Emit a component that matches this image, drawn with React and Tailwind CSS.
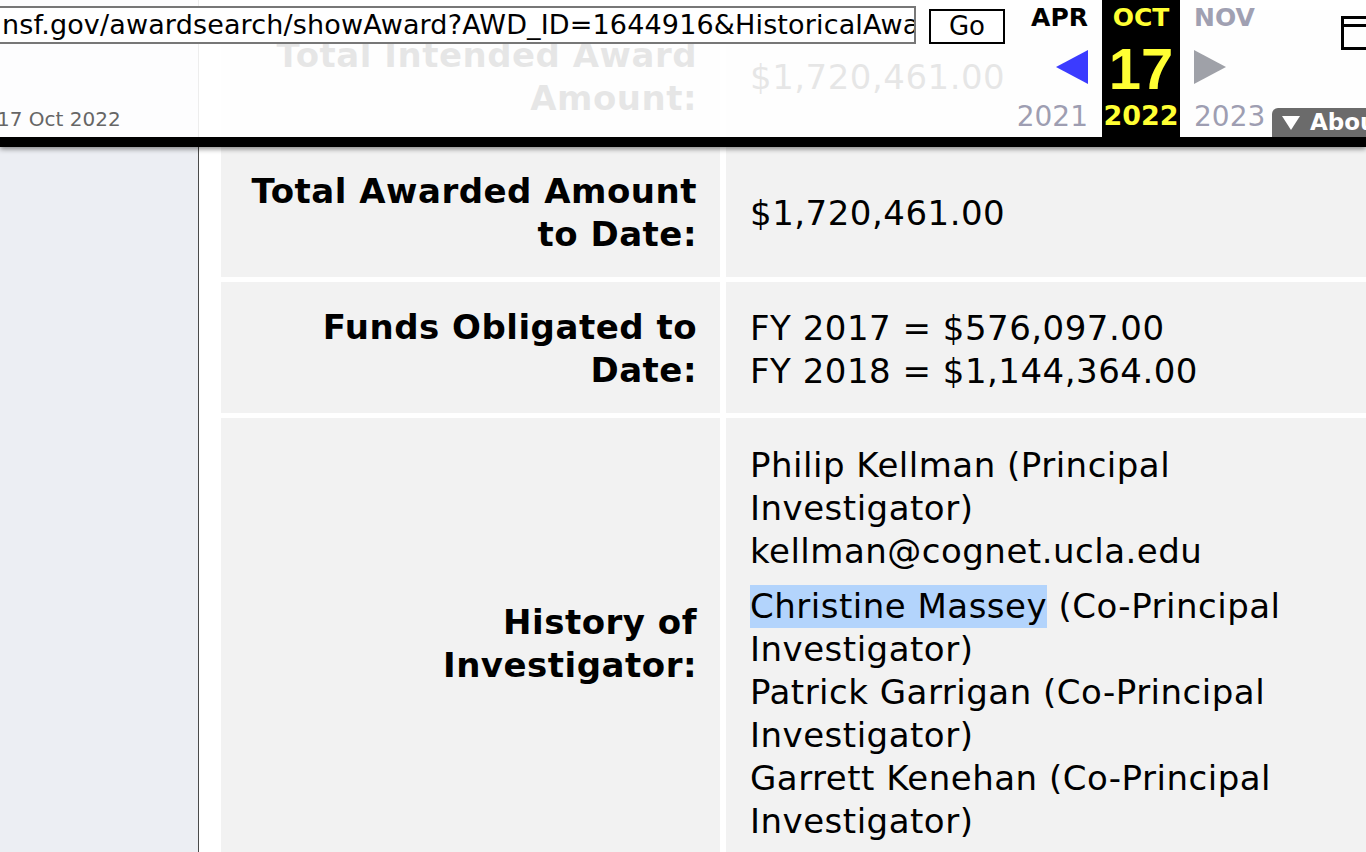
import React from 'react';

const rows = [
  {
    label: ['Total Intended Award', 'Amount:'],
    value: ['$1,720,461.00'],
  },
  {
    label: ['Total Awarded Amount', 'to Date:'],
    value: ['$1,720,461.00'],
  },
  {
    label: ['Funds Obligated to', 'Date:'],
    value: ['FY 2017 = $576,097.00', 'FY 2018 = $1,144,364.00'],
  },
];

const LeftArrow = () => (
  <svg width="32" height="34" viewBox="0 0 32 34">
    <polygon points="32,0 32,34 0,17" fill="#3b3bff" />
  </svg>
);

const RightArrow = () => (
  <svg width="32" height="34" viewBox="0 0 32 34">
    <polygon points="0,0 0,34 32,17" fill="#9fa1a8" />
  </svg>
);

const Toolbar = () => (
  <div className="absolute inset-x-0 top-0 h-[147px] bg-white/90 border-b-[10px] border-black shadow-[0_2px_5px_rgba(0,0,0,0.45)] flex font-['DejaVu_Sans',sans-serif]">
    {/* url + capture date */}
    <div className="w-[1012px] shrink-0 flex flex-col">
      <div className="flex items-start mt-[6px]">
        <div className="-ml-[4px] w-[920px] h-[38px] border-2 border-[#777] bg-white flex items-center pl-[4px] overflow-hidden whitespace-nowrap text-[27px] tracking-[0.15px] text-black">
          nsf.gov/awardsearch/showAward?AWD_ID=1644916&amp;HistoricalAwards=false
        </div>
        <div className="ml-[13px] mt-[3px] w-[76px] h-[35px] border-2 border-black bg-white flex items-center justify-center text-[26px] text-black">
          Go
        </div>
      </div>
      <div className="mt-auto mb-[3px] -ml-[3px] text-[20px] text-[#666]">17 Oct 2022</div>
    </div>

    {/* previous month */}
    <div className="w-[90px] shrink-0 flex flex-col items-end pr-[14px] pt-[3px]">
      <div className="text-[25px] font-bold leading-[30px] text-black">APR</div>
      <div className="mt-[17px]"><LeftArrow /></div>
      <div className="mt-[18px] text-[28px] leading-[30px] text-[#9e9eb2]">2021</div>
    </div>

    {/* current */}
    <div className="w-[78px] shrink-0 bg-black flex flex-col items-center pt-[3px]">
      <div className="text-[25px] font-bold leading-[30px] text-[#ffff33]">OCT</div>
      <div className="font-['Liberation_Sans',sans-serif] text-[58px] font-bold leading-[60px] mt-[6px] text-[#ffff33]">17</div>
      <div className="text-[27px] font-bold leading-[30px] mt-[2px] text-[#ffff33]">2022</div>
    </div>

    {/* next month */}
    <div className="w-[92px] shrink-0 flex flex-col items-start pl-[14px] pt-[3px]">
      <div className="text-[25px] font-bold leading-[30px] text-[#a0a0b2]">NOV</div>
      <div className="mt-[17px]"><RightArrow /></div>
      <div className="mt-[18px] text-[28px] leading-[30px] text-[#9e9eb2]">2023</div>
    </div>

    {/* icon + about tab */}
    <div className="flex-1 min-w-0 overflow-hidden flex flex-col">
      <svg className="ml-[69px] mt-[16px] shrink-0" width="34" height="34" viewBox="0 0 34 34">
        <rect x="1.5" y="1.5" width="34" height="31" fill="none" stroke="#000" strokeWidth="3" />
        <line x1="0" y1="9.5" x2="34" y2="9.5" stroke="#000" strokeWidth="3" />
      </svg>
      <div className="mt-auto h-[29px] bg-[#6b6b6b] rounded-tl-[6px] flex items-center pl-[10px] gap-[10px] text-white whitespace-nowrap overflow-hidden">
        <svg className="shrink-0" width="18" height="14" viewBox="0 0 18 14">
          <polygon points="0,0 18,0 9,14" fill="#fff" />
        </svg>
        <span className="text-[23px] font-bold leading-none">About</span>
      </div>
    </div>
  </div>
);

export default function App() {
  return (
    <div className="relative w-[1366px] h-[852px] overflow-hidden bg-white font-['DejaVu_Sans',sans-serif] text-black">
      <div className="flex h-full">
        <aside className="w-[199px] shrink-0 bg-[#eceef3] border-r border-[#4a4a4a]" />
        <main className="flex-1 pl-[22px] pt-[10px]">
          <div className="grid grid-cols-[499px_640px] gap-x-[6px] gap-y-[5px] text-[34px] leading-[43px] tracking-[0.5px]">
            {rows.map((row) => (
              <React.Fragment key={row.label[0]}>
                <div className="bg-[#f2f2f2] pt-[24px] pb-[21px] pr-[23px] flex flex-col justify-center items-end font-bold whitespace-nowrap">
                  {row.label.map((l) => (
                    <div key={l}>{l}</div>
                  ))}
                </div>
                <div className="bg-[#f2f2f2] pl-[24px] pt-[4px] flex flex-col justify-center whitespace-nowrap">
                  {row.value.map((v) => (
                    <div key={v}>{v}</div>
                  ))}
                </div>
              </React.Fragment>
            ))}

            <div className="bg-[#f2f2f2] pr-[23px] pt-[4px] flex flex-col justify-center items-end font-bold whitespace-nowrap">
              <div>History of</div>
              <div>Investigator:</div>
            </div>
            <div className="bg-[#f2f2f2] pl-[24px] pt-[26px] pb-[22px] whitespace-nowrap">
              <div>Philip Kellman (Principal</div>
              <div>Investigator)</div>
              <div>kellman@cognet.ucla.edu</div>
              <div className="mt-[12px]">
                <div>
                  <span className="inline-block bg-[#b3d4fc]">Christine Massey</span> (Co-Principal
                </div>
                <div>Investigator)</div>
                <div>Patrick Garrigan (Co-Principal</div>
                <div>Investigator)</div>
                <div>Garrett Kenehan (Co-Principal</div>
                <div>Investigator)</div>
              </div>
            </div>
          </div>
        </main>
      </div>
      <Toolbar />
    </div>
  );
}
